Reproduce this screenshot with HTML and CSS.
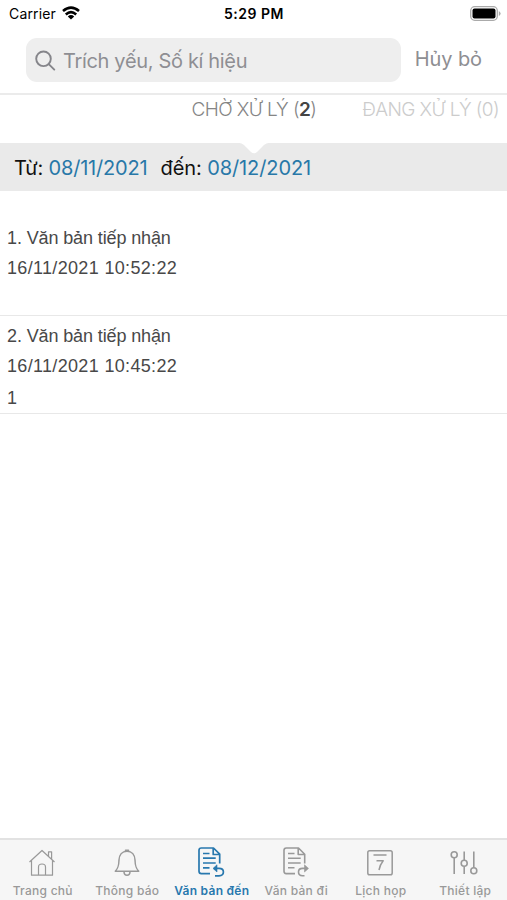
FILE: index.html
```html
<!DOCTYPE html>
<html lang="vi">
<head>
<meta charset="utf-8">
<title>Văn bản đến</title>
<link rel="stylesheet" href="styles.css">
</head>
<body>
<header class="status">
  <div class="carrier"><span class="carrier-name">Carrier</span>
    <svg class="wifi" width="18" height="14" viewBox="0 0 18 14" fill="none" stroke="#000" stroke-width="2.6"><path d="M1 5Q9-1.8 17 5M3.8 8.4Q9 4 14.2 8.4"/><path d="M9 13.5L5.8 10.4Q9 7.8 12.2 10.4Z" fill="#000" stroke="none"/></svg>
  </div>
  <span class="clock">5:29 PM</span>
  <svg class="battery" width="31" height="15" viewBox="0 0 31 15"><rect x=".7" y=".7" width="26.6" height="13.6" rx="4" fill="#fff" stroke="#aaa" stroke-width="1.3"/><rect x="2.5" y="2.5" width="23" height="10" rx="2" fill="#000"/><path d="M28.8 5Q30.6 6 30.6 7.5T28.8 10Z" fill="#aaa"/></svg>
</header>
<div class="searchbar">
  <div class="field">
    <svg width="22" height="22" viewBox="0 0 22 22" fill="none" stroke="#85858a" stroke-width="1.9" stroke-linecap="round"><circle cx="8.5" cy="8.8" r="7.3"/><path d="M14 14.3L19.3 19.6"/></svg>
    <span class="placeholder">Trích yếu, Số kí hiệu</span>
  </div>
  <span class="cancel">Hủy bỏ</span>
</div>
<nav class="segments">
  <span class="segment active">CHỜ XỬ LÝ (<b>2</b>)</span>
  <span class="segment">ĐANG XỬ LÝ (0)</span>
</nav>
<div class="range">
  <svg class="notch" width="32" height="12" viewBox="0 0 32 12"><path d="M0 0V1C4 1 5 2 8 5L13 10Q16 12.5 19 10L24 5C27 2 28 1 32 1V0Z" fill="#fff"/></svg>
  <span class="from">Từ: <a>08/11/2021</a></span>
  <span class="to">đến: <a>08/12/2021</a></span>
</div>
<main class="list">
  <article class="item"><p class="title">1. Văn bản tiếp nhận</p><p class="time">16/11/2021 10:52:22</p></article>
  <article class="item"><p class="title">2. Văn bản tiếp nhận</p><p class="time">16/11/2021 10:45:22</p><p class="note">1</p></article>
</main>
<footer class="tabs">
  <div class="tab"><svg viewBox="0 0 30 32" stroke-width="1.2"><path d="M2.5 16L15 4.5 27.5 16M4.5 14.5V29.2H25.5V14.5M21.5 10V5.8H24.6V13M11.5 29V21Q11.5 18 15 18T18.5 21V29"/></svg><span>Trang chủ</span></div>
  <div class="tab"><svg viewBox="0 0 30 32" stroke-width="1.5"><path d="M15 5.2C10 5.2 7.2 9 7 14C6.8 20 6.2 22 3.3 25.3H26.7C23.8 22 23.2 20 23 14C22.8 9 20 5.2 15 5.2ZM13.5 5V4.2H16.5V5M12 26Q12.2 29.3 15 29.3T18 26"/></svg><span>Thông báo</span></div>
  <div class="tab selected"><svg viewBox="0 0 30 32" stroke-width="1.7"><path d="M14 27.6H5.3Q3 27.6 3 25.3V4.3Q3 2 5.3 2H17.5L23.7 8.2V17.5M17.2 2.5V8.5H23.4M7 7.5H13.5M7 12.2H19.7M7 17H19.7M7 21.8H13.5M19 29.8H23Q27.4 29.6 27.4 26T23 22.4H18"/><path d="M21 18.8L17 22.4L21 26Z" fill="currentColor" stroke-width=".6"/></svg><span>Văn bản đến</span></div>
  <div class="tab"><svg viewBox="0 0 30 32" stroke-width="1.6"><path d="M14 27.6H5.3Q3 27.6 3 25.3V4.3Q3 2 5.3 2H17.5L23.7 8.2V17.5M17.2 2.5V8.5H23.4M7 7.5H13.5M7 12.2H19.7M7 17H19.7M7 21.8H13.5M23.5 29.8H21.5Q17.5 29.6 17.5 26T21.5 22.4H26"/><path d="M23.5 18.8L27.5 22.4L23.5 26Z" fill="currentColor" stroke-width=".6"/></svg><span>Văn bản đi</span></div>
  <div class="tab"><svg viewBox="0 0 30 32" stroke-width="1.5"><rect x="2.8" y="4.7" width="24.4" height="24" rx="1.8"/><path d="M8.5 9H21.5M11.5 14.7H18.2Q15 18.5 14 24"/></svg><span>Lịch họp</span></div>
  <div class="tab"><svg viewBox="0 0 30 32" stroke-width="1.6"><path d="M4.2 12V28M14.2 5.5V14M14.2 20.5V28M23.8 5.5V21.5"/><circle cx="4.2" cy="8.7" r="3"/><circle cx="14.2" cy="17.3" r="3"/><circle cx="23.8" cy="24.7" r="3"/></svg><span>Thiết lập</span></div>
</footer>
</body>
</html>
```
FILE: styles.css
```css
* { box-sizing: border-box; }
body { margin: 0; width: 507px; height: 900px; overflow: hidden; display: flex; flex-direction: column; background: #fff; font-family: Inter, "Liberation Sans", sans-serif; white-space: nowrap; }
p { margin: 0; }
svg { display: block; flex: none; }
.status { height: 28px; flex: none; display: grid; grid-template-columns: 1fr auto 1fr; align-items: center; padding: 0 6px 0 9px; }
.carrier { display: flex; gap: 6px; align-items: center; font-size: 14px; letter-spacing: .15px; padding-bottom: 2px; }
.clock { font-size: 14px; font-weight: 600; letter-spacing: .5px; padding: 0 2px 2px 0; }
.wifi { margin-top: -1px; }
.battery { justify-self: end; margin-top: -1px; }
.searchbar { height: 67px; flex: none; display: flex; padding: 10px 25px 0 26px; border-bottom: 2px solid #ebebeb; }
.field { width: 376px; height: 44px; border-radius: 11px; background: #eee; display: flex; align-items: center; gap: 6px; padding: 1px 0 0 9px; color: #8e8e93; font-size: 20px; letter-spacing: -.33px; }
.cancel { margin-left: 14px; line-height: 43px; font-size: 20px; letter-spacing: -.1px; color: #8e8e93; }
.segments { height: 48px; flex: none; display: flex; justify-content: flex-end; gap: 46px; padding-right: 8px; font-size: 19px; font-weight: 300; letter-spacing: -.6px; line-height: 30px; color: #ccc; }
.active { color: #858585; }
.active b { color: #444; font-weight: 600; }
.range { position: relative; height: 48px; flex: none; display: flex; gap: 13px; padding-left: 14px; background: #eaeaea; font-size: 20px; letter-spacing: -.1px; line-height: 50px; color: #111; }
.from { letter-spacing: -.18px; }
.range a { color: #2878a8; }
.notch { position: absolute; left: 238px; top: -1px; }
.item { height: 98px; padding: 5px 7px 0; border-bottom: 1px solid #e8e8e8; color: #484848; font-family: "Liberation Sans", sans-serif; font-size: 18px; line-height: 30px; }
.item:first-child { height: 125px; padding-top: 32px; }
.title { letter-spacing: -.12px; }
.time { letter-spacing: .33px; }
.note { line-height: 34px; }
.tabs { margin-top: auto; height: 62px; flex: none; display: grid; grid-template-columns: repeat(6, 1fr); border-top: 2px solid #e2e2e2; background: #f6f6f6; color: #999; }
.tab { display: flex; flex-direction: column; align-items: center; padding-top: 6px; font-size: 12px; font-weight: 500; line-height: 14px; letter-spacing: .27px; }
.tab svg { width: 30px; height: 32px; fill: none; stroke: currentColor; stroke-linejoin: round; }
.tab span { margin: 6px 0 0 1px; }
.selected { color: #2878ae; }
.tab.selected span { font-weight: 600; }
```
